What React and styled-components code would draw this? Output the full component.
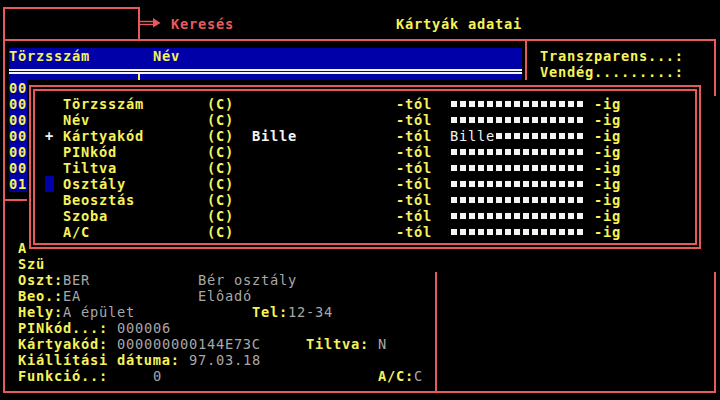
import React from 'react';
import styled, { createGlobalStyle } from 'styled-components';

const C = {
  red: '#e85a5a',
  yellow: '#f6f25a',
  blue: '#0000a8',
  gray: '#a8a8a8',
  white: '#f4f4f4',
  black: '#000000',
};

const Global = createGlobalStyle`
  html, body { margin: 0; padding: 0; background: #000; }
  #root { width: 720px; height: 400px; overflow: hidden; }
`;

const Screen = styled.div`
  display: grid;
  grid-template-columns: repeat(80, 9px);
  grid-template-rows: repeat(25, 16px);
  width: 720px;
  height: 400px;
  background: ${C.black};
  overflow: hidden;
  font-family: "DejaVu Sans Mono", "Liberation Mono", monospace;
  font-size: 13.7px;
  line-height: 16px;
  letter-spacing: 0.75px;
`;

const Frame = styled.div`
  grid-column: ${(p) => p.$c1 + 1} / ${(p) => p.$c2 + 2};
  grid-row: ${(p) => p.$r1 + 1} / ${(p) => p.$r2 + 2};
  margin: 7px 4px 7px 3px;
  border: 2px solid ${C.red};
`;

const Text = styled.span`
  grid-column: ${(p) => p.$c + 1} / span ${(p) => p.$span || 1};
  grid-row: ${(p) => p.$r + 1};
  white-space: pre;
  min-width: 0;
  color: ${(p) => p.$color || C.yellow};
  font-weight: ${(p) => (p.$light ? 400 : 700)};
  background: ${(p) => p.$bg || 'transparent'};
  z-index: 1;
`;

const HeaderBar = styled.div`
  grid-column: 2 / 59;
  grid-row: 4 / 6;
  background: ${C.blue};
`;

const DoubleRule = styled.div`
  grid-column: 2 / 59;
  grid-row: 5;
  align-self: start;
  margin-top: 5px;
  height: 1px;
  border-top: 2px solid ${C.white};
  border-bottom: 2px solid ${C.white};
  z-index: 1;
`;

const Tick = styled.div`
  grid-column: 16;
  grid-row: 5;
  align-self: start;
  justify-self: start;
  margin: 10px 0 0 3px;
  width: 2px;
  height: 6px;
  background: ${C.yellow};
  z-index: 1;
`;

const ArrowIcon = styled.svg`
  grid-column: 16 / 19;
  grid-row: 2;
  width: 27px;
  height: 16px;
  z-index: 1;
`;

const Dialog = styled.div`
  grid-column: 4 / 79;
  grid-row: 6 / 17;
  z-index: 5;
  background: ${C.black};
  box-shadow: 18px 16px 0 ${C.black};
  display: grid;
  grid-template-columns: repeat(75, 9px);
  grid-template-rows: repeat(11, 16px);
`;

const DoubleFrame = styled.div`
  grid-column: 1 / -1;
  grid-row: 1 / -1;
  margin: 5px 1px 7px 2px;
  border: 2px solid ${C.red};
  padding: 2px;
  display: flex;
`;

const InnerFrame = styled.div`
  flex: 1;
  border: 2px solid ${C.red};
`;

const Field = styled.span`
  grid-column: ${(p) => p.$c + 1} / span 15;
  grid-row: ${(p) => p.$r + 1};
  display: flex;
  white-space: pre;
  color: ${C.white};
  font-weight: 400;
  z-index: 1;
`;

const Squares = styled.span`
  width: ${(p) => p.$n * 9}px;
  height: 16px;
  background-image: linear-gradient(90deg, ${C.white} 6px, transparent 6px);
  background-size: 9px 6px;
  background-position: 1px 5px;
  background-repeat: repeat-x;
`;

const Cursor = styled.span`
  grid-column: ${(p) => p.$c + 1};
  grid-row: ${(p) => p.$r + 1};
  background: ${C.blue};
  z-index: 1;
`;

const criteria = [
  'Törzsszám',
  'Név',
  'Kártyakód',
  'PINkód',
  'Tiltva',
  'Osztály',
  'Beosztás',
  'Szoba',
  'A/C',
];

const listRows = ['00', '00', '00', '00', '00', '00', '01'];

function SearchDialog() {
  return (
    <Dialog>
      <DoubleFrame>
        <InnerFrame />
      </DoubleFrame>
      {criteria.map((label, i) => {
        const r = i + 1;
        const value = label === 'Kártyakód' ? 'Bille' : '';
        return (
          <React.Fragment key={label}>
            {value && <Text $c={2} $r={r} $color={C.white}>+</Text>}
            <Text $c={4} $r={r}>{label}</Text>
            <Text $c={20} $r={r}>(C)</Text>
            {value && <Text $c={25} $r={r} $color={C.white}>{value}</Text>}
            <Text $c={41} $r={r}>-tól</Text>
            <Field $c={47} $r={r}>
              {value}
              <Squares $n={15 - value.length} />
            </Field>
            <Text $c={63} $r={r}>-ig</Text>
          </React.Fragment>
        );
      })}
      <Cursor $c={2} $r={6} />
    </Dialog>
  );
}

export default function App() {
  return (
    <>
      <Global />
      <Screen>
        <Frame $c1={0} $c2={15} $r1={0} $r2={2} />
        <Frame $c1={0} $c2={58} $r1={2} $r2={12} />
        <Frame $c1={58} $c2={79} $r1={2} $r2={12} />
        <Frame $c1={0} $c2={79} $r1={12} $r2={24} />
        <Frame $c1={48} $c2={79} $r1={12} $r2={24} />

        <ArrowIcon viewBox="0 0 27 16">
          <line x1="5" y1="5.5" x2="19" y2="5.5" stroke={C.red} strokeWidth="1.4" />
          <line x1="5" y1="8.5" x2="19" y2="8.5" stroke={C.red} strokeWidth="1.4" />
          <polygon points="18,2 25.5,7 18,11.5" fill={C.red} />
        </ArrowIcon>
        <Text $c={19} $r={1} $color={C.red}>Keresés</Text>
        <Text $c={44} $r={1}>Kártyák adatai</Text>

        <HeaderBar />
        <DoubleRule />
        <Tick />
        <Text $c={1} $r={3}>Törzsszám</Text>
        <Text $c={17} $r={3}>Név</Text>

        <Text $c={60} $r={3}>Transzparens...:</Text>
        <Text $c={60} $r={4}>Vendég.........:</Text>

        {listRows.map((v, i) => (
          <Text key={i} $c={1} $r={5 + i} $span={2} $bg={C.blue}>{v}</Text>
        ))}

        <Text $c={2} $r={15}>A</Text>
        <Text $c={2} $r={16}>Szü</Text>

        <Text $c={2} $r={17}>Oszt:</Text>
        <Text $c={7} $r={17} $color={C.gray} $light>BER</Text>
        <Text $c={22} $r={17} $color={C.gray} $light>Bér osztály</Text>

        <Text $c={2} $r={18}>Beo.:</Text>
        <Text $c={7} $r={18} $color={C.gray} $light>EA</Text>
        <Text $c={22} $r={18} $color={C.gray} $light>Elôadó</Text>

        <Text $c={2} $r={19}>Hely:</Text>
        <Text $c={7} $r={19} $color={C.gray} $light>A épület</Text>
        <Text $c={28} $r={19}>Tel:</Text>
        <Text $c={32} $r={19} $color={C.gray} $light>12-34</Text>

        <Text $c={2} $r={20}>PINkód...:</Text>
        <Text $c={13} $r={20} $color={C.gray} $light>000006</Text>

        <Text $c={2} $r={21}>Kártyakód:</Text>
        <Text $c={13} $r={21} $color={C.gray} $light>000000000144E73C</Text>
        <Text $c={34} $r={21}>Tiltva:</Text>
        <Text $c={42} $r={21} $color={C.gray} $light>N</Text>

        <Text $c={2} $r={22}>Kiállítási dátuma:</Text>
        <Text $c={21} $r={22} $color={C.gray} $light>97.03.18</Text>

        <Text $c={2} $r={23}>Funkció..:</Text>
        <Text $c={17} $r={23} $color={C.gray} $light>0</Text>
        <Text $c={42} $r={23}>A/C:</Text>
        <Text $c={46} $r={23} $color={C.gray} $light>C</Text>

        <SearchDialog />
      </Screen>
    </>
  );
}
